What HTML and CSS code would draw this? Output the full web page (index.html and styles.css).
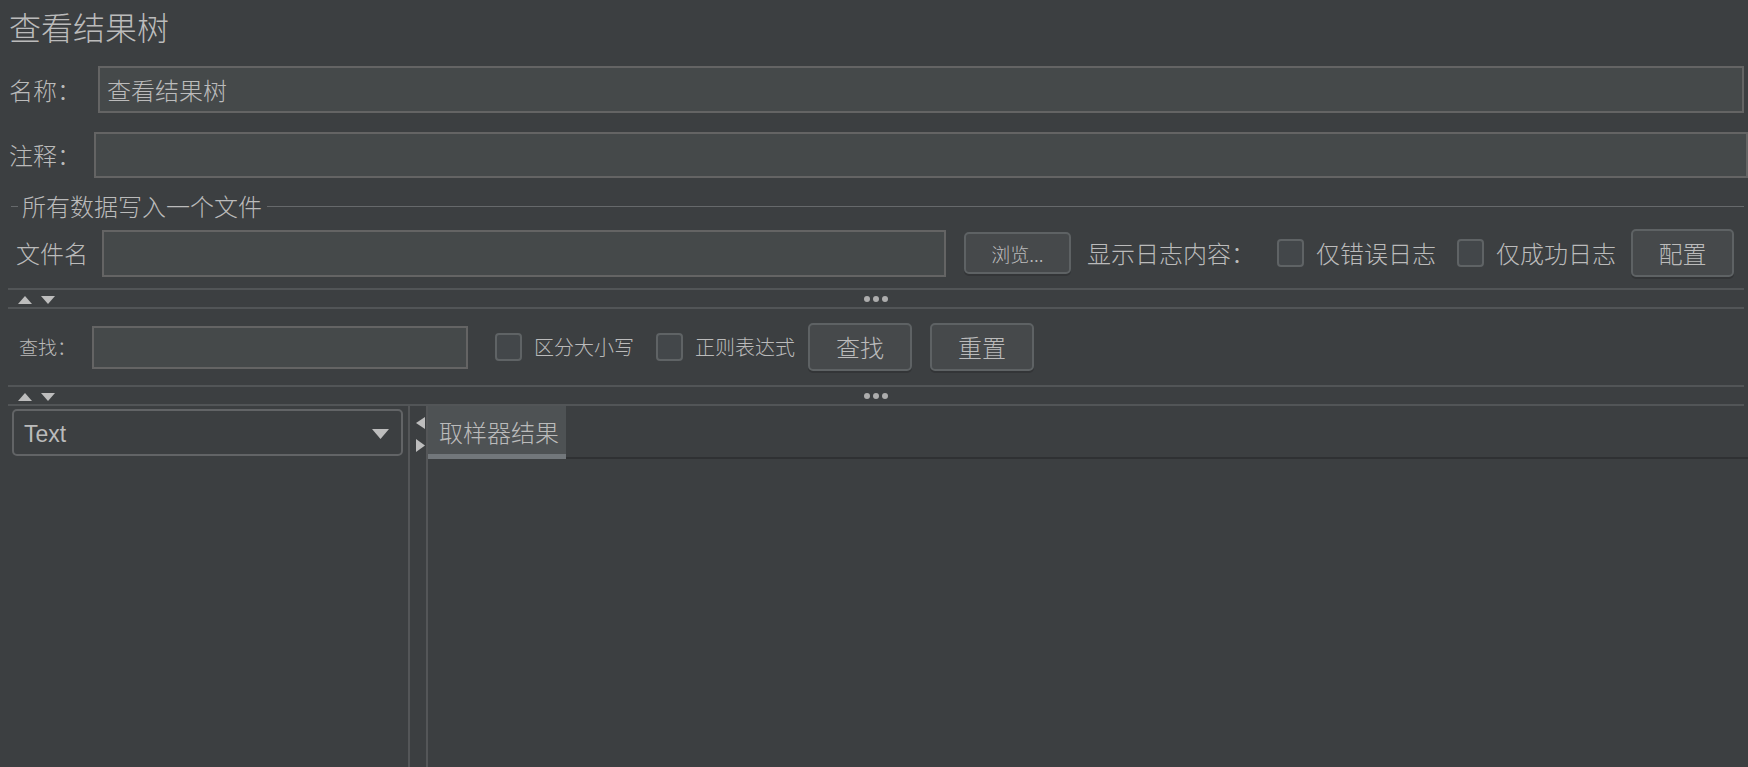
FILE: index.html
```html
<!DOCTYPE html>
<html lang="zh-CN">
<head>
<meta charset="utf-8">
<title>查看结果树</title>
<link rel="stylesheet" href="styles.css">
</head>
<body>
<div class="app">
  <div class="title">查看结果树</div>

  <div class="row name-row">
    <span class="label">名称：</span>
    <div class="input">查看结果树</div>
  </div>

  <div class="row comment-row">
    <span class="label">注释：</span>
    <div class="input"></div>
  </div>

  <div class="group-head"><span class="group-title">所有数据写入一个文件</span></div>

  <div class="file-row">
    <span class="label">文件名</span>
    <div class="input file-input"></div>
    <button class="btn btn-small browse">浏览...</button>
    <span class="label log-label">显示日志内容：</span>
    <span class="check cb-err"></span>
    <span class="label check-text">仅错误日志</span>
    <span class="check cb-ok"></span>
    <span class="label check-text">仅成功日志</span>
    <button class="btn btn-config">配置</button>
  </div>

  <div class="splitbar split-1">
    <div class="arrows">
      <svg width="14" height="8" viewBox="0 0 14 8"><polygon points="0,8 7,0 14,8" class="tri"/></svg>
      <svg width="14" height="8" viewBox="0 0 14 8"><polygon points="0,0 14,0 7,8" class="tri"/></svg>
    </div>
    <div class="dots"><i></i><i></i><i></i></div>
    <div></div>
  </div>

  <div class="search-row">
    <span class="s-label">查找：</span>
    <div class="input search-input"></div>
    <span class="check cb-case"></span>
    <span class="s-text">区分大小写</span>
    <span class="check cb-regex"></span>
    <span class="s-text">正则表达式</span>
    <button class="btn btn-search">查找</button>
    <button class="btn btn-reset">重置</button>
  </div>

  <div class="splitbar split-2">
    <div class="arrows">
      <svg width="14" height="8" viewBox="0 0 14 8"><polygon points="0,8 7,0 14,8" class="tri"/></svg>
      <svg width="14" height="8" viewBox="0 0 14 8"><polygon points="0,0 14,0 7,8" class="tri"/></svg>
    </div>
    <div class="dots"><i></i><i></i><i></i></div>
    <div></div>
  </div>

  <div class="bottom">
    <div class="left-pane">
      <div class="combo">
        <span class="combo-text">Text</span>
        <svg width="17" height="10" viewBox="0 0 17 10"><polygon points="0,0 17,0 8.5,10" class="tri"/></svg>
      </div>
    </div>
    <div class="divider">
      <svg width="9" height="12" viewBox="0 0 9 12"><polygon points="9,0 9,12 0,6" class="tri"/></svg>
      <svg width="9" height="13" viewBox="0 0 9 13"><polygon points="0,0 9,6.5 0,13" class="tri"/></svg>
    </div>
    <div class="right-pane">
      <div class="tabs">
        <div class="tab">取样器结果</div>
        <div class="tab-fill"></div>
      </div>
      <div class="tab-body"></div>
    </div>
  </div>
</div>
</body>
</html>
```

FILE: styles.css
```css
* { box-sizing: border-box; }

html, body {
  margin: 0;
  padding: 0;
  background: #3c3f41;
  height: 100%;
  overflow: hidden;
}

.app {
  width: 1748px;
  height: 767px;
  display: flex;
  flex-direction: column;
  color: #bbbbbb;
  font-family: "Noto Sans CJK SC", "Noto Sans", sans-serif;
  font-weight: 300;
  font-size: 24px;
}

.title {
  font-size: 32px;
  line-height: 40px;
  height: 46px;
  padding: 6px 0 0 9px;
}

.row {
  display: flex;
  align-items: center;
  padding-left: 9px;
}

.label {
  line-height: 28px;
  white-space: nowrap;
}

.input {
  background: #45494a;
  border: 2px solid #646464;
  display: flex;
  align-items: center;
  padding-left: 7px;
  font-size: 24px;
  color: #bbbbbb;
}

.name-row { margin-top: 20px; }
.name-row .input {
  flex: 1;
  height: 47px;
  margin-left: 17px;
  margin-right: 4px;
}

.comment-row { margin-top: 19px; }
.comment-row .input {
  flex: 1;
  height: 46px;
  margin-left: 13px;
}

.group-head {
  margin-top: 14px;
  height: 28px;
  display: flex;
  align-items: center;
  gap: 4px;
  padding-left: 11px;
  padding-right: 4px;
}
.group-head::before {
  content: "";
  width: 7px;
  height: 1px;
  background: #66696b;
}
.group-head::after {
  content: "";
  flex: 1;
  height: 1px;
  background: #66696b;
}
.group-title {
  line-height: 28px;
  padding-right: 1px;
}

.file-row {
  margin-top: 9px;
  height: 48px;
  display: flex;
  align-items: center;
  padding-left: 16px;
}
.file-input {
  width: 844px;
  height: 47px;
  margin-left: 14px;
}

.btn {
  font-family: "Noto Sans CJK SC", "Noto Sans", sans-serif;
  font-weight: 300;
  color: #bbbbbb;
  background: #46494b;
  border: 2px solid #5e6264;
  border-radius: 5px;
  box-shadow: 0 2px 0 #333537;
  padding: 0;
  display: flex;
  align-items: center;
  justify-content: center;
  font-size: 24px;
  line-height: 1;
}
.btn-small {
  font-size: 19px;
}
.browse {
  width: 107px;
  height: 42px;
  margin-left: 18px;
}
.log-label { margin-left: 16px; }

.check {
  display: inline-block;
  width: 27px;
  height: 28px;
  background: #43474a;
  border: 2px solid #5f6365;
  border-radius: 4px;
  flex: none;
}
.cb-err { margin-left: 22px; }
.cb-ok { margin-left: 21px; }
.check-text { margin-left: 12px; }
.btn-config {
  width: 103px;
  height: 48px;
  margin-left: 15px;
}

.splitbar {
  margin-left: 8px;
  margin-right: 4px;
  height: 21px;
  border-top: 2px solid #525557;
  border-bottom: 2px solid #525557;
  display: grid;
  grid-template-columns: 1fr auto 1fr;
  align-items: center;
}
.split-1 { margin-top: 11px; }
.split-2 { margin-top: 14px; }

.arrows {
  display: flex;
  gap: 9px;
  padding-left: 10px;
  padding-top: 2px;
}
.arrows svg { display: block; }
.tri { fill: #bdbdbd; }

.dots {
  display: flex;
  gap: 3px;
  padding-top: 1px;
}
.dots i {
  display: block;
  width: 6px;
  height: 6px;
  border-radius: 50%;
  background: #adadad;
}

.search-row {
  margin-top: 14px;
  height: 48px;
  display: flex;
  align-items: center;
  padding-left: 19px;
}
.s-label {
  font-size: 19px;
  line-height: 24px;
}
.search-input {
  width: 376px;
  height: 43px;
  margin-left: 16px;
}
.s-text {
  font-size: 20px;
  line-height: 26px;
  margin-left: 12px;
  white-space: nowrap;
}
.cb-case { margin-left: 27px; }
.cb-regex { margin-left: 22px; }
.btn-search {
  width: 104px;
  height: 48px;
  margin-left: 13px;
}
.btn-reset {
  width: 104px;
  height: 48px;
  margin-left: 18px;
}

.bottom {
  flex: 1;
  display: flex;
  min-height: 0;
}
.left-pane {
  width: 410px;
  border-right: 2px solid #545658;
  padding: 3px 0 0 12px;
}
.combo {
  width: 391px;
  height: 47px;
  border: 2px solid #626466;
  border-radius: 5px;
  display: flex;
  align-items: center;
  justify-content: space-between;
  padding: 0 12px 0 10px;
}
.combo-text {
  font-family: "Liberation Sans", Arial, sans-serif;
  font-weight: 400;
  font-size: 23px;
  color: #bbbbbb;
  padding-top: 3px;
}
.combo svg { display: block; margin-top: 2px; }

.divider {
  width: 18px;
  border-right: 2px solid #545658;
  display: flex;
  flex-direction: column;
  align-items: center;
  padding-top: 11px;
  gap: 10px;
}
.divider svg { display: block; margin-left: 4px; }

.right-pane {
  flex: 1;
  display: flex;
  flex-direction: column;
}
.tabs {
  display: flex;
  height: 53px;
}
.tab {
  width: 138px;
  background: #4e5254;
  border-bottom: 5px solid #72777b;
  font-size: 24px;
  line-height: 28px;
  padding: 12px 0 0 11px;
}
.tab-fill {
  flex: 1;
  border-bottom: 2px solid #2f3133;
}
.tab-body { flex: 1; }
```
